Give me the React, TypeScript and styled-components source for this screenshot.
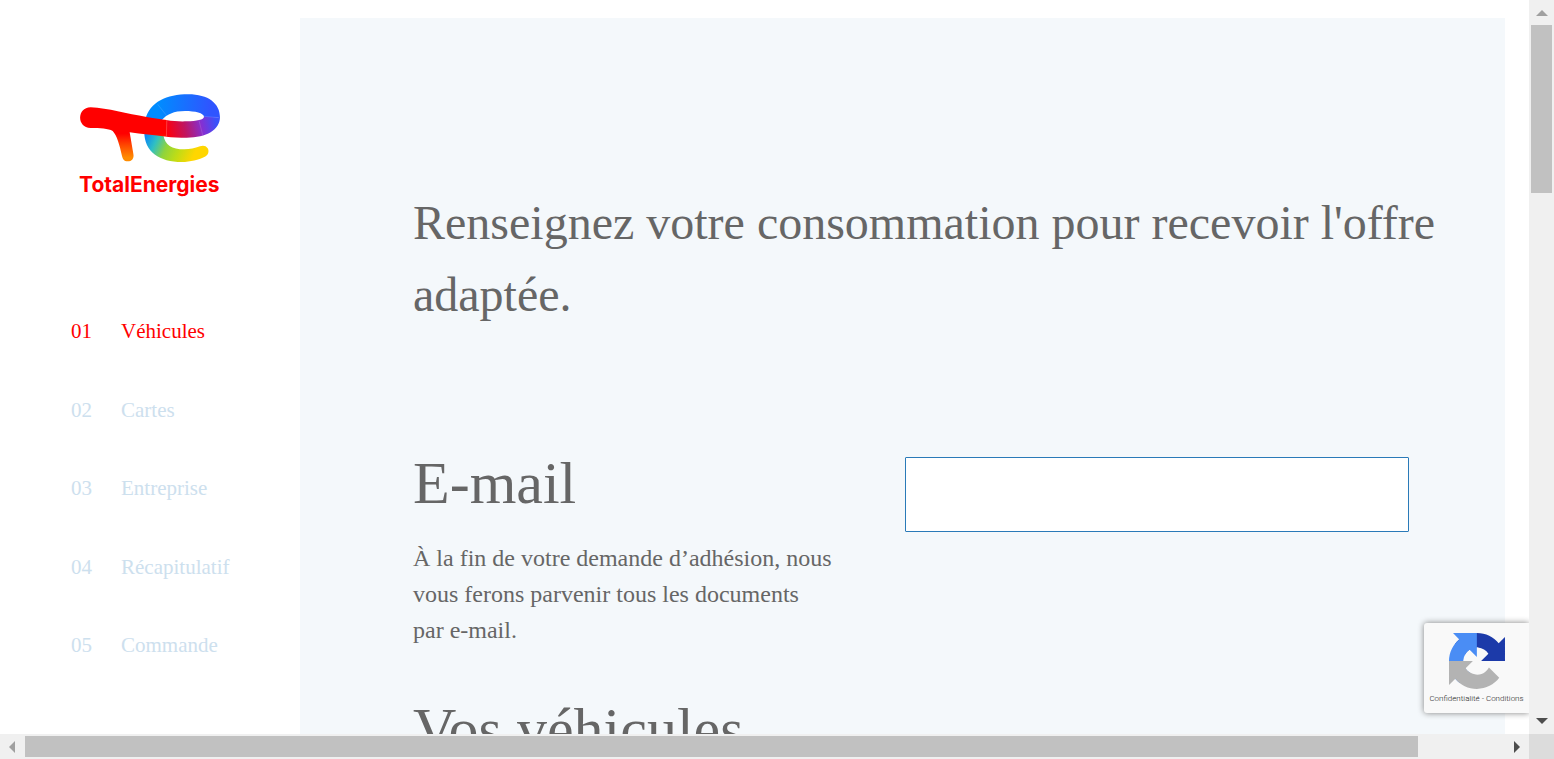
import React from "react";
import styled, { createGlobalStyle } from "styled-components";

const GlobalStyle = createGlobalStyle`
  *, *::before, *::after { box-sizing: border-box; }
  body {
    margin: 0;
    background: #fff;
    color: #666;
    font-family: "Liberation Serif", "Times New Roman", serif;
  }
`;

const Frame = styled.div`
  display: grid;
  grid-template-columns: minmax(0, 1fr) 25px;
  grid-template-rows: minmax(0, 1fr) 25px;
  height: 100vh;
`;

const Viewport = styled.div`
  position: relative;
  overflow: hidden;
`;

const Page = styled.div`
  display: flex;
  align-items: stretch;
  min-height: 100%;
`;

const Sidebar = styled.aside`
  flex: 0 0 300px;
  padding: 85px 0 0 70px;
`;

const LogoLink = styled.a`
  display: block;
  width: 160px;
  text-decoration: none;
`;

const LogoMark = styled.svg`
  display: block;
  width: 160px;
  height: 80px;
`;

const LogoName = styled.span`
  display: block;
  padding-left: 9px;
  margin-top: 8px;
  color: #f00;
  font: 700 21px/24px Inter, sans-serif;
`;

const StepList = styled.ol`
  display: flex;
  flex-direction: column;
  justify-content: space-between;
  height: 344px;
  margin: 119px 0 0;
  padding: 0;
  list-style: none;
`;

const StepLink = styled.a<{ $active?: boolean }>`
  display: flex;
  padding-left: 1px;
  color: ${(p) => (p.$active ? "#f00" : "#cde0ee")};
  font-size: 21px;
  line-height: 30px;
  text-decoration: none;
`;

const StepNumber = styled.span`
  flex: 0 0 50px;
`;

const Main = styled.main`
  flex: 1 1 0;
  min-width: 0;
  margin: 18px 24px 0 0;
  padding: 169px 64px 60px 113px;
  background: #f4f8fb;
`;

const Title = styled.h1`
  margin: 0 0 116px;
  font-size: 48px;
  font-weight: 400;
  line-height: 72px;
`;

const Section = styled.section`
  display: grid;
  grid-template-columns: minmax(0, 1fr) 504px;
  column-gap: 42px;
  align-items: start;
  margin-bottom: 45px;
  padding-right: 32px;
`;

const SectionTitle = styled.h2`
  margin: 0;
  font-size: 60px;
  font-weight: 400;
  line-height: 72px;
`;

const Hint = styled.p`
  margin: 21px 0 0;
  padding-right: 30px;
  font-size: 24px;
  line-height: 36px;
`;

const NoBreak = styled.span`
  white-space: nowrap;
`;

const TextField = styled.input`
  width: 100%;
  height: 75px;
  margin: 10px 0 0;
  padding: 0 24px;
  border: 1px solid #2a7ab8;
  border-radius: 1px;
  background: #fff;
  color: inherit;
  font: inherit;
  font-size: 24px;
`;

const Badge = styled.aside`
  position: absolute;
  right: 0;
  bottom: 21px;
  display: flex;
  flex-direction: column;
  align-items: center;
  width: 105px;
  height: 90px;
  padding-top: 10px;
  border-radius: 3px 0 0 3px;
  background: #f9f9f9;
  box-shadow: 0 0 6px #808080;
`;

const BadgeMark = styled.svg`
  display: block;
  width: 56px;
  height: 56px;
`;

const BadgeLinks = styled.div`
  margin-top: 4px;
  color: #222;
  font: 300 8px/12px Roboto, sans-serif;
  white-space: nowrap;
`;

const BadgeLink = styled.a`
  color: inherit;
  text-decoration: none;
`;

const ScrollTrack = styled.div<{ $vertical?: boolean }>`
  display: flex;
  flex-direction: ${(p) => (p.$vertical ? "column" : "row")};
  background: #f0f0f0;
`;

const ScrollButton = styled.button<{ $idle?: boolean }>`
  display: grid;
  flex: 0 0 25px;
  place-items: center;
  padding: 0;
  border: 0;
  background: none;
  color: ${(p) => (p.$idle ? "#a0a0a0" : "#4d4d4d")};
`;

const ScrollThumb = styled.div<{ $share: number; $vertical?: boolean }>`
  flex: ${(p) => p.$share} 1 0;
  margin: ${(p) => (p.$vertical ? "0 2px" : "2px 0")};
  background: #c1c1c1;
`;

const ScrollRest = styled.div<{ $share: number }>`
  flex: ${(p) => p.$share} 1 0;
`;

const ScrollCorner = styled.div`
  background: #dcdcdc;
`;

const steps = ["Véhicules", "Cartes", "Entreprise", "Récapitulatif", "Commande"];

const arrows = {
  up: "M0 9 6 3l6 6z",
  down: "M0 2 6 8l6-6z",
  left: "M8 0 2 6l6 6z",
  right: "M3 0 9 6l-6 6z",
};

function Arrow({ to }: { to: keyof typeof arrows }) {
  return (
    <svg width="12" height="12" viewBox="0 0 12 12" aria-hidden="true">
      <path fill="currentColor" d={arrows[to]} />
    </svg>
  );
}

function Logo() {
  return (
    <LogoLink href="#">
      <LogoMark viewBox="0 0 480 240" aria-hidden="true">
        <defs>
          <linearGradient id="stem" gradientUnits="userSpaceOnUse" x1="170" y1="146" x2="170" y2="218">
            <stop offset="0" stopColor="#f00" />
            <stop offset="0.5" stopColor="#ff4a00" />
            <stop offset="1" stopColor="#ff8c00" />
          </linearGradient>
          <linearGradient id="tail" gradientUnits="userSpaceOnUse" x1="228" y1="150" x2="370" y2="215">
            <stop offset="0" stopColor="#0a87f5" />
            <stop offset="0.22" stopColor="#2fbfc4" />
            <stop offset="0.45" stopColor="#8fd43c" />
            <stop offset="0.68" stopColor="#bcdc18" />
            <stop offset="1" stopColor="#ffd600" />
          </linearGradient>
          <linearGradient id="crown" gradientUnits="userSpaceOnUse" x1="265" y1="60" x2="420" y2="70">
            <stop offset="0" stopColor="#008cff" />
            <stop offset="1" stopColor="#2f55ff" />
          </linearGradient>
          <linearGradient id="bar" gradientUnits="userSpaceOnUse" x1="292" y1="130" x2="436" y2="98">
            <stop offset="0" stopColor="#fb0010" />
            <stop offset="0.35" stopColor="#c01560" />
            <stop offset="0.7" stopColor="#8430d2" />
            <stop offset="1" stopColor="#3a52fb" />
          </linearGradient>
        </defs>
        <path fill="url(#tail)" d="M223 140C222 200 270 231 335 231C362 231 386 224 403 216C416 211 418 198 413 190C408 182 399 181 390 184C374 190 360 193 343 193C305 193 285 180 280 150Z" />
        <path fill="url(#crown)" d="M226 104C240 50 290 28 355 28C415 28 450 55 450 98L402 96C402 84 375 78 345 78C312 78 290 88 275 106Z" />
        <path fill="url(#bar)" d="M450 97C449 135 410 158 350 158C330 158 305 157 289 155L289 105C310 109 335 110 350 109C380 108 402 104 402 95Z" />
        <path fill="url(#stem)" d="M62 67C115 70 170 86 230 96C255 100 275 103 290 105L290 155C250 151 215 147 179 142L190 206C193 221 185 229 173 229C162 229 158 222 156 213C149 182 141 151 128 138C115 130 90 129 62 129C20 129 20 67 62 67Z" />
        <path fill="none" stroke="#fff" strokeOpacity="0.4" d="M263 58 290 92M402 94 446 98M387 106 398 150M291 105 289 155" />
      </LogoMark>
      <LogoName>TotalEnergies</LogoName>
    </LogoLink>
  );
}

function CaptchaBadge() {
  return (
    <Badge>
      <BadgeMark viewBox="0 0 64 64" aria-hidden="true">
        <path fill="#1c3aa9" d="M64 31.955l-.033-1.37V4.687l-7.16 7.16C50.948 4.674 42.033.093 32.05.093c-10.4 0-19.622 4.96-25.458 12.64l11.736 11.86a15.55 15.55 0 0 1 4.754-5.334c2.05-1.6 4.952-2.906 8.968-2.906.485 0 .86.057 1.135.163 4.976.393 9.288 3.14 11.828 7.124l-8.307 8.307L64 31.953" />
        <path fill="#4a8df5" d="M31.862.094l-1.37.033H4.594l7.16 7.16C4.58 13.147 0 22.06 0 32.046c0 10.4 4.96 19.622 12.64 25.458L24.5 45.768a15.55 15.55 0 0 1-5.334-4.754c-1.6-2.05-2.906-4.952-2.906-8.968 0-.485.057-.86.163-1.135.393-4.976 3.14-9.288 7.124-11.828l8.307 8.307L31.86.095" />
        <path fill="#b3b3b3" d="M.001 32.045l.033 1.37v25.898l7.16-7.16c5.86 7.173 14.774 11.754 24.76 11.754 10.4 0 19.622-4.96 25.458-12.64l-11.736-11.86a15.55 15.55 0 0 1-4.754 5.334c-2.05 1.6-4.952 2.906-8.968 2.906-.485 0-.86-.057-1.135-.163-4.976-.393-9.288-3.14-11.828-7.124l8.307-8.307c-10.522.04-22.4.066-27.295-.005" />
      </BadgeMark>
      <BadgeLinks>
        <BadgeLink href="#confidentialite">Confidentialité</BadgeLink>
        {" - "}
        <BadgeLink href="#conditions">Conditions</BadgeLink>
      </BadgeLinks>
    </Badge>
  );
}

export default function App() {
  return (
    <>
      <GlobalStyle />
      <Frame>
        <Viewport>
          <Page>
            <Sidebar>
              <Logo />
              <nav>
                <StepList>
                  {steps.map((label, i) => (
                    <li key={label}>
                      <StepLink href={`#etape-${i + 1}`} $active={i === 0}>
                        <StepNumber>{`0${i + 1}`}</StepNumber>
                        {label}
                      </StepLink>
                    </li>
                  ))}
                </StepList>
              </nav>
            </Sidebar>
            <Main>
              <Title>Renseignez votre consommation pour recevoir l'offre adaptée.</Title>
              <Section>
                <div>
                  <SectionTitle>
                    <label htmlFor="email">E-mail</label>
                  </SectionTitle>
                  <Hint>
                    À la fin de votre demande d’adhésion, nous vous ferons parvenir tous les documents{" "}
                    <NoBreak>par e-mail.</NoBreak>
                  </Hint>
                </div>
                <TextField id="email" type="email" />
              </Section>
              <Section>
                <SectionTitle>Vos véhicules</SectionTitle>
              </Section>
            </Main>
          </Page>
          <CaptchaBadge />
        </Viewport>
        <ScrollTrack $vertical>
          <ScrollButton $idle aria-label="Défiler vers le haut"><Arrow to="up" /></ScrollButton>
          <ScrollThumb $vertical $share={168} />
          <ScrollRest $share={516} />
          <ScrollButton aria-label="Défiler vers le bas"><Arrow to="down" /></ScrollButton>
        </ScrollTrack>
        <ScrollTrack>
          <ScrollButton $idle aria-label="Défiler vers la gauche"><Arrow to="left" /></ScrollButton>
          <ScrollThumb $share={1393} />
          <ScrollRest $share={86} />
          <ScrollButton aria-label="Défiler vers la droite"><Arrow to="right" /></ScrollButton>
        </ScrollTrack>
        <ScrollCorner />
      </Frame>
    </>
  );
}
